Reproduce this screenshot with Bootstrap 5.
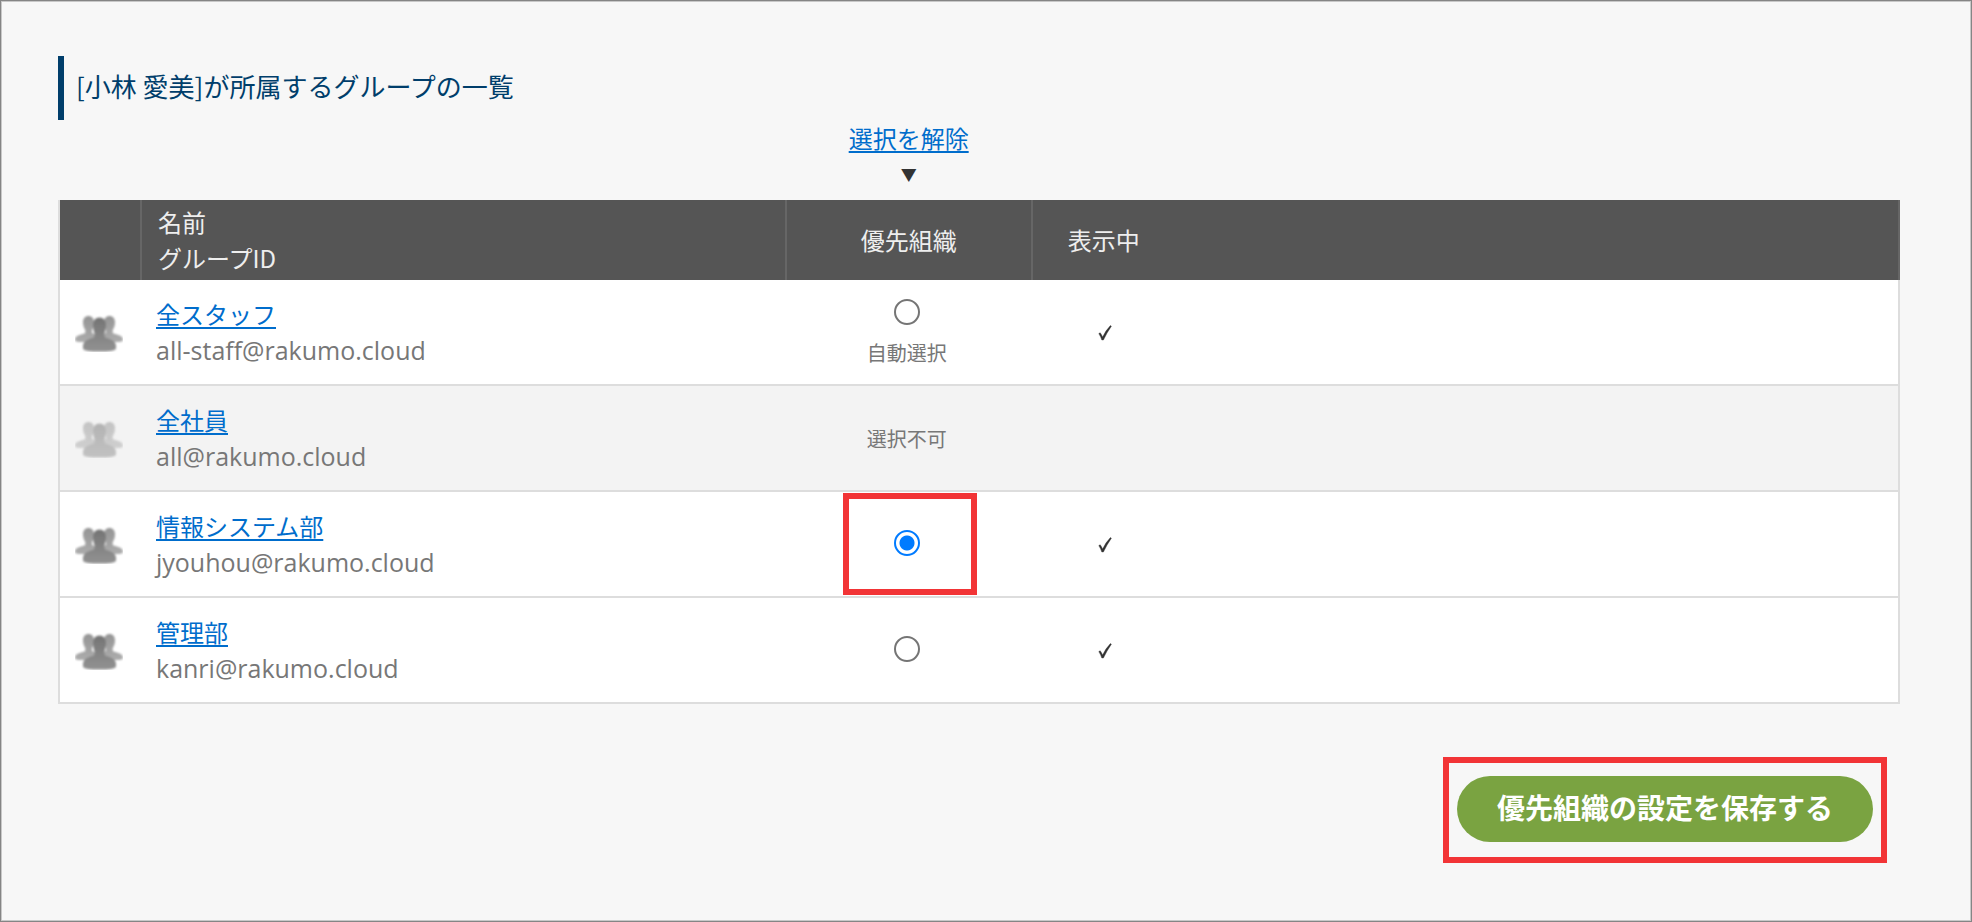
<!DOCTYPE html>
<html lang="ja">
<head>
<meta charset="utf-8">
<meta name="viewport" content="width=device-width, initial-scale=1">
<title>所属グループの一覧</title>
<link href="https://cdn.jsdelivr.net/npm/bootstrap@5.3.0/dist/css/bootstrap.min.css" rel="stylesheet">
<style>
  body {
    background: #f7f7f7;
    color: #333;
    font-family: "Noto Sans CJK JP", sans-serif;
    font-size: 24px;
    line-height: 36px;
  }
  .page-frame {
    border: 1px solid #858585;
    box-shadow: inset 0 0 0 1px #c8c8c8;
    padding: 55px 71px 48px 57px;
  }
  .page-title {
    border-left: 6px solid #003e6b;
    color: #003e6b;
    font-size: 26px;
    font-weight: 400;
    line-height: 60px;
    padding: 0 0 4px 12px;
  }
  a {
    color: #006dcc;
    text-decoration-thickness: 2px;
    text-underline-offset: 3px;
  }
  .group-table {
    table-layout: fixed;
    border-collapse: separate;
    border-spacing: 0;
    color: #333;
    vertical-align: middle;
  }
  .group-table > :not(caption) > * > * {
    background: transparent;
    border: 0 solid #ddd;
    padding: 0;
    font-weight: 400;
    vertical-align: middle;
  }
  .col-icon { width: 84px; }
  .col-name { width: 35%; }
  .col-priority { width: 246px; }
  .col-visible { width: 144px; }
  .group-table .clear-row > * {
    padding-bottom: 8px;
    border-right: 2px solid transparent;
  }
  .arrow { font-size: 16px; }
  .group-table .head-row > * {
    background: #555;
    color: #eee;
    height: 80px;
    border-right: 2px solid #666;
  }
  .group-table .head-row > .open-end { border-right-color: #555; }
  .group-table .head-row > :first-child { border-left: 2px solid #ddd; }
  .group-table .head-row > .name-cell { padding-left: 16px; }
  .group-table tbody > tr > * {
    background: #fff;
    height: 106px;
    border-bottom-width: 2px;
  }
  .group-table tbody > tr > :first-child {
    border-left-width: 2px;
    padding: 0 4px 2px 0;
  }
  .group-table tbody > tr > :last-child { border-right-width: 2px; }
  .group-table tbody > tr > .name-cell { padding-left: 14px; }
  .group-table tbody > tr > .priority-cell { padding: 0 6px 2px 0; }
  .group-table tbody > tr > .stacked-cell { padding: 4px 6px 0 0; }
  .group-table tbody > tr > .visible-cell { padding-bottom: 4px; }
  .row-off .people { opacity: .5; }
  .group-table tbody > .row-off > * { background: #f3f3f3; }
  .mail {
    color: #777;
    font-family: "Open Sans", "Noto Sans CJK JP", sans-serif;
    font-size: 25px;
  }
  .note { color: #777; font-size: 20px; line-height: 32px; }
  .pick {
    appearance: none;
    width: 26px;
    height: 26px;
    margin: 0;
    border: 2px solid #757575;
    border-radius: 50%;
    background: #fff;
  }
  .pick:checked {
    border-color: #007bff;
    background: radial-gradient(circle, #007bff 0 7px, #fff 8px);
  }
  .pick-stack { gap: 12px; }
  .callout { border: 6px solid #f23436; }
  .callout-pick {
    inset: 1px 56px;
    pointer-events: none;
  }
  .callout-save { padding: 13px 8px 15px; }
  .save-row { padding: 53px 13px 0 0; }
  .btn-save {
    --bs-btn-color: #fff;
    --bs-btn-bg: #7aa341;
    --bs-btn-hover-color: #fff;
    --bs-btn-hover-bg: #6b9138;
    font-size: 28px;
    font-weight: 700;
    line-height: 40px;
    padding: 11px 40px 15px;
  }
</style>
</head>
<body>
<svg width="0" height="0" class="position-absolute" aria-hidden="true">
  <defs>
    <linearGradient id="front" x1="0" y1="0" x2="0" y2="1"><stop offset="0" stop-color="#747474"/><stop offset="1" stop-color="#929292"/></linearGradient>
    <linearGradient id="back" x1="0" y1="0" x2="0" y2="1"><stop offset="0" stop-color="#959595"/><stop offset="1" stop-color="#acacac"/></linearGradient>
    <filter id="soft"><feGaussianBlur stdDeviation="1"/></filter>
  </defs>
  <symbol id="tick" viewBox="0 0 16 16">
    <path d="M1.8 8.6 L3.2 7.8 Q4.6 9.6 5.6 12 Q8.6 5.6 13.4.6 L14.4 1.2 Q10 7.4 6.4 15 L4.8 15 Q3.6 11.400 1.800 8.600Z" fill="#333" stroke="#333" stroke-width=".4"/>
  </symbol>
  <symbol id="people" viewBox="0 0 48 40">
    <g filter="url(#soft)">
      <path fill="url(#back)" d="M13.500 4C17 4 19 6.500 19 10.500C19 14 18 16 17 18V21L24 24V30H6C2 30 0 29.500 0 28C0 24.500 3 23.500 6 22.500C8.500 22 10 21.500 10.300 20.500V18C9 16 8 14 8 10.500C8 6.500 10 4 13.500 4Z"/>
      <path fill="url(#back)" d="M34.500 4C31 4 29 6.500 29 10.500C29 14 30 16 31 18V21L24 24V30H42C46 30 48 29.500 48 28C48 24.500 45 23.500 42 22.500C39.500 22 38 21.500 37.700 20.500V18C39 16 40 14 40 10.500C40 6.500 38 4 34.500 4Z"/>
      <path fill="url(#front)" d="M24.500 5.500C28.500 5.500 31 8.500 31 13C31 17 30 19.500 29.500 21.500V24.500C30 27 40.500 26.500 41 33.500V36.500C41 39 33 39.500 24.500 39.500S8 39 8 36.500V33.500C8.500 26.500 19 27 19.500 24.500V21.500C19 19.500 18 17 18 13C18 8.500 20.500 5.500 24.500 5.500Z"/>
    </g>
  </symbol>
</svg>

<main class="page-frame min-vh-100">
  <h1 class="page-title mb-0">[小林 愛美]が所属するグループの一覧</h1>
  <form>
    <table class="table group-table mb-0">
      <colgroup>
        <col class="col-icon"><col class="col-name"><col class="col-priority"><col class="col-visible"><col>
      </colgroup>
      <thead>
        <tr class="clear-row">
          <td colspan="2"></td>
          <td class="text-center"><a href="#">選択を解除</a><div class="arrow">▼</div></td>
          <td colspan="2"></td>
        </tr>
        <tr class="head-row">
          <th></th>
          <th scope="col" class="name-cell">名前<br>グループID</th>
          <th scope="col" class="text-center">優先組織</th>
          <th scope="col" class="text-center open-end">表示中</th>
          <th></th>
        </tr>
      </thead>
      <tbody>
        <tr>
          <td class="text-center"><svg class="people" width="48" height="40"><use href="#people"/></svg></td>
          <td class="name-cell"><a href="#">全スタッフ</a><div class="mail">all-staff@rakumo.cloud</div></td>
          <td class="priority-cell stacked-cell">
            <div class="pick-stack d-flex flex-column align-items-center">
              <input class="pick" type="radio" name="priority" id="pick-staff">
              <label class="note" for="pick-staff">自動選択</label>
            </div>
          </td>
          <td class="visible-cell text-center"><svg width="16" height="16" role="img" aria-label="表示中"><use href="#tick"/></svg></td>
          <td></td>
        </tr>
        <tr class="row-off">
          <td class="text-center"><svg class="people" width="48" height="40"><use href="#people"/></svg></td>
          <td class="name-cell"><a href="#">全社員</a><div class="mail">all@rakumo.cloud</div></td>
          <td class="priority-cell text-center"><span class="note">選択不可</span></td>
          <td></td>
          <td></td>
        </tr>
        <tr>
          <td class="text-center"><svg class="people" width="48" height="40"><use href="#people"/></svg></td>
          <td class="name-cell"><a href="#">情報システム部</a><div class="mail">jyouhou@rakumo.cloud</div></td>
          <td class="priority-cell position-relative">
            <div class="d-flex justify-content-center"><input class="pick" type="radio" name="priority" aria-label="情報システム部" checked></div>
            <div class="callout callout-pick position-absolute"></div>
          </td>
          <td class="visible-cell text-center"><svg width="16" height="16" role="img" aria-label="表示中"><use href="#tick"/></svg></td>
          <td></td>
        </tr>
        <tr>
          <td class="text-center"><svg class="people" width="48" height="40"><use href="#people"/></svg></td>
          <td class="name-cell"><a href="#">管理部</a><div class="mail">kanri@rakumo.cloud</div></td>
          <td class="priority-cell"><div class="d-flex justify-content-center"><input class="pick" type="radio" name="priority" aria-label="管理部"></div></td>
          <td class="visible-cell text-center"><svg width="16" height="16" role="img" aria-label="表示中"><use href="#tick"/></svg></td>
          <td></td>
        </tr>
      </tbody>
    </table>
    <div class="save-row d-flex justify-content-end">
      <div class="callout callout-save">
        <button type="button" class="btn btn-save border-0 rounded-pill d-block">優先組織の設定を保存する</button>
      </div>
    </div>
  </form>
</main>
<script src="https://cdn.jsdelivr.net/npm/bootstrap@5.3.0/dist/js/bootstrap.bundle.min.js"></script>
</body>
</html>
